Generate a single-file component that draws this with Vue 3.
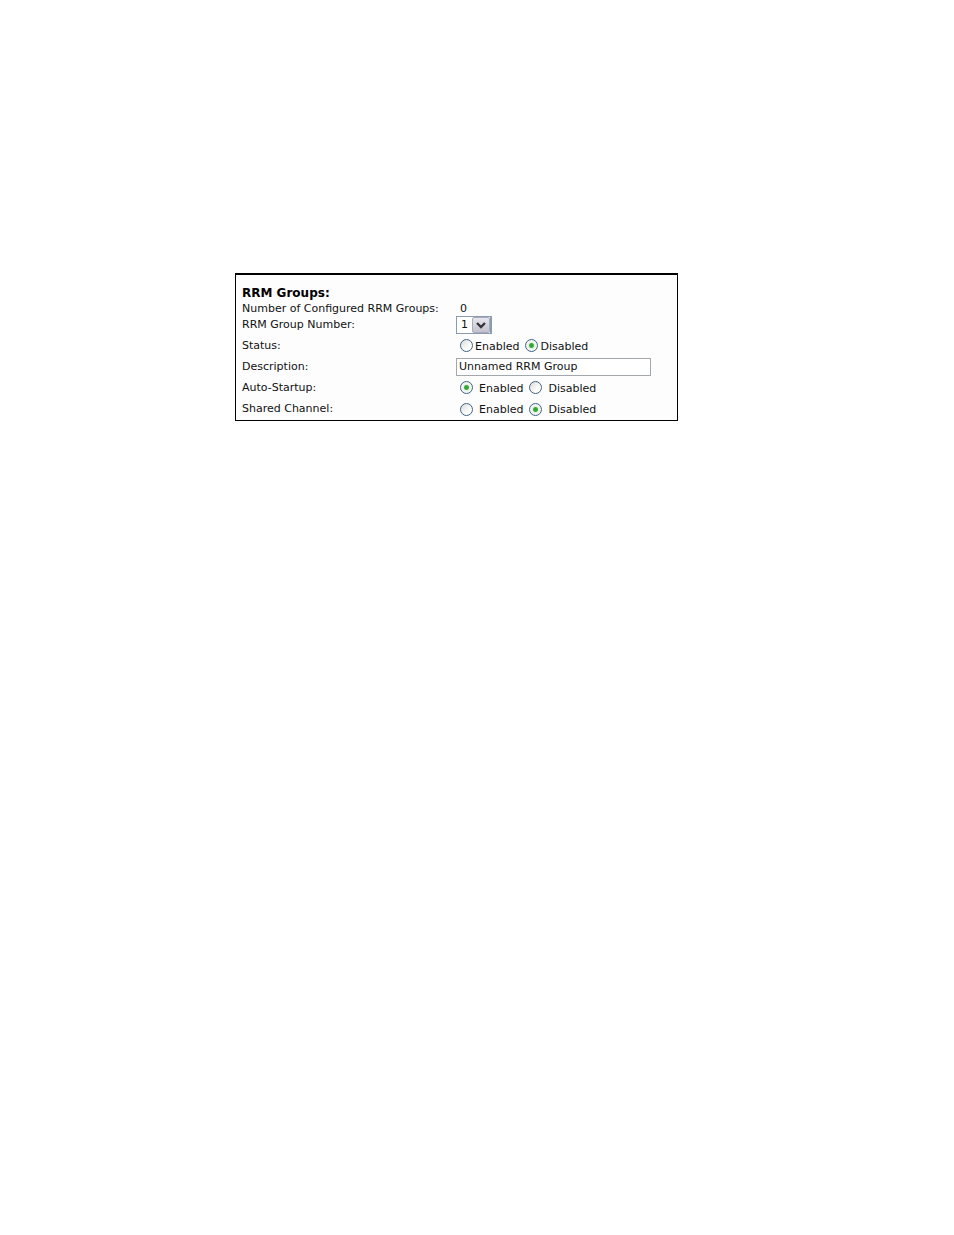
<script setup>
import { ref } from 'vue'

const groupNumber = ref('1')
const description = ref('Unnamed RRM Group')
const status = ref('Disabled')
const autoStartup = ref('Enabled')
const sharedChannel = ref('Disabled')
const options = ['Enabled', 'Disabled']
</script>

<template>
  <main class="page">
    <form class="panel" @submit.prevent>
      <h1 class="title">RRM Groups:</h1>

      <div class="row count">
        <span class="label">Number of Configured RRM Groups:</span>
        <span class="value">0</span>
      </div>

      <div class="row number">
        <label class="label" for="group-number">RRM Group Number:</label>
        <div class="select">
          <select id="group-number" v-model="groupNumber">
            <option>1</option>
            <option>2</option>
            <option>3</option>
          </select>
          <span class="arrow">
            <svg width="10" height="7" viewBox="0 0 10 7" aria-hidden="true">
              <path d="M1 1 L5 5 L9 1" fill="none" stroke="#33343c" stroke-width="2.4" />
            </svg>
          </span>
        </div>
      </div>

      <div class="row status" role="radiogroup" aria-labelledby="status-label">
        <span id="status-label" class="label">Status:</span>
        <div class="choices tight">
          <label v-for="o in options" :key="o" class="choice">
            <input v-model="status" type="radio" name="status" :value="o" />
            <span>{{ o }}</span>
          </label>
        </div>
      </div>

      <div class="row description">
        <label class="label" for="description">Description:</label>
        <input id="description" v-model="description" class="text" type="text" />
      </div>

      <div class="row startup" role="radiogroup" aria-labelledby="startup-label">
        <span id="startup-label" class="label">Auto-Startup:</span>
        <div class="choices">
          <label v-for="o in options" :key="o" class="choice">
            <input v-model="autoStartup" type="radio" name="startup" :value="o" />
            <span>{{ o }}</span>
          </label>
        </div>
      </div>

      <div class="row shared" role="radiogroup" aria-labelledby="shared-label">
        <span id="shared-label" class="label">Shared Channel:</span>
        <div class="choices">
          <label v-for="o in options" :key="o" class="choice">
            <input v-model="sharedChannel" type="radio" name="shared" :value="o" />
            <span>{{ o }}</span>
          </label>
        </div>
      </div>
    </form>
  </main>
</template>

<style>
body {
  background: #fff;
}
</style>

<style scoped>
.page {
  padding: 273px 276px 0 235px;
  font-family: Verdana, "DejaVu Sans", sans-serif;
  font-size: 11px;
  line-height: 14px;
  color: #111;
}
.panel {
  border: 1px solid #000;
  border-top-width: 2px;
  padding: 10px 6px 1px;
  background: #fdfdfd;
}
.title {
  margin: 0;
  font-size: 12px;
  font-weight: bold;
  line-height: 16px;
  color: #000;
}
.row {
  display: grid;
  grid-template-columns: 214px 1fr;
  align-items: center;
  white-space: nowrap;
}
.count {
  min-height: 15px;
}
.number {
  min-height: 18px;
}
.status,
.startup {
  min-height: 23px;
}
.description {
  min-height: 19px;
}
.shared {
  min-height: 20px;
}
.value {
  padding-left: 4px;
}
.select {
  position: relative;
  width: 36px;
  height: 18px;
}
select {
  appearance: none;
  box-sizing: border-box;
  display: block;
  width: 100%;
  height: 100%;
  margin: 0;
  padding: 0 0 0 4px;
  border: 1px solid #8d9bb0;
  border-right-width: 2px;
  border-radius: 0;
  background: #fff;
  font: inherit;
  color: inherit;
}
.arrow {
  position: absolute;
  top: 1px;
  right: 2px;
  bottom: 1px;
  width: 18px;
  box-sizing: border-box;
  display: flex;
  align-items: center;
  justify-content: center;
  border: 1px solid #a9abba;
  border-radius: 2px;
  background: linear-gradient(#e6e6ee, #c2c2ce);
  pointer-events: none;
}
.choices {
  display: flex;
  gap: 6px;
  padding-left: 4px;
}
.choice {
  display: flex;
  align-items: center;
  gap: 6px;
}
.choice span {
  padding-top: 2px;
}
.tight .choice {
  gap: 2px;
}
.choice input {
  appearance: none;
  box-sizing: border-box;
  width: 13px;
  height: 13px;
  margin: 0;
  border: 1px solid #3f6285;
  border-radius: 50%;
  background: linear-gradient(135deg, #dcdcd8, #fff 70%);
}
.choice input:checked {
  background: radial-gradient(circle, #2fa32f 0, #3aac3a 2px, #e9f1e6 3px, #fafafa 6px);
}
.text {
  box-sizing: border-box;
  width: 195px;
  height: 18px;
  margin: 0;
  padding: 0 2px;
  border: 1px solid #a3a8ac;
  border-radius: 0;
  background: #fff;
  font: inherit;
  color: inherit;
}
</style>
